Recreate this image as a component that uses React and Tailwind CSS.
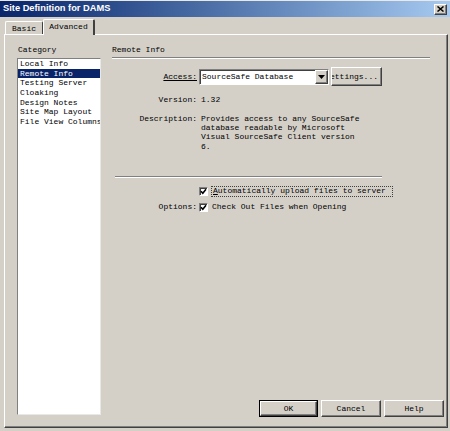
const raised =
  "bg-[#d4d0c8] border border-t-white border-l-white border-r-[#404040] border-b-[#404040] shadow-[inset_-1px_-1px_0_#808080]"
const sunken =
  "border border-t-[#808080] border-l-[#808080] border-b-white border-r-white shadow-[inset_1px_1px_0_#404040]"

function Check() {
  return (
    <span className={`w-[9px] h-[9px] bg-white flex items-center justify-center ${sunken}`}>
      <svg width="7" height="7" viewBox="0 0 7 7">
        <path d="M1 3.2 L2.8 5.2 L6 1.2" stroke="black" strokeWidth="1.6" fill="none" />
      </svg>
    </span>
  )
}

function Row({ label, children, className = "" }) {
  return (
    <div className={`flex items-center ${className}`}>
      <div className="w-[85px] shrink-0 text-right whitespace-nowrap">{label}</div>
      {children}
    </div>
  )
}

export default function App() {
  const categories = [
    "Local Info",
    "Remote Info",
    "Testing Server",
    "Cloaking",
    "Design Notes",
    "Site Map Layout",
    "File View Columns",
  ]

  return (
    <div className="w-[450px] h-[431px] bg-[#d4d0c8] flex flex-col overflow-hidden font-['Liberation_Mono',monospace] text-[8px] leading-[9.5px] text-black">
      {/* title bar */}
      <div className="h-[17px] shrink-0 flex items-center justify-between bg-linear-to-r from-[#0a246a] to-[#a6caf0] border-t border-[#e8e8e8]">
        <span className="pl-[3px] font-['Liberation_Sans',Arial,sans-serif] font-bold text-[9.3px] text-white whitespace-nowrap">
          Site Definition for DAMS
        </span>
        <span className={`w-[13px] h-[11px] mr-[3px] flex items-center justify-center ${raised}`}>
          <svg width="7" height="6" viewBox="0 0 7 6">
            <path d="M0.5 0.5 L6.5 5.5 M6.5 0.5 L0.5 5.5" stroke="black" strokeWidth="1.5" />
          </svg>
        </span>
      </div>

      {/* tabs */}
      <div className="mt-[2px] h-[15px] shrink-0 flex items-end pl-[5px]">
        <div className="w-[38px] h-[13px] pt-[1px] flex items-center justify-center border-t border-l border-white border-r border-r-[#404040] rounded-t-[2px]">
          Basic
        </div>
        <div className="relative z-10 w-[52px] h-[16px] mb-[-1px] pb-[1px] bg-[#d4d0c8] flex items-center justify-center border-t border-l border-white border-r-2 border-r-[#404040] rounded-t-[2px]">
          Advanced
        </div>
      </div>

      {/* tab panel */}
      <div className="ml-[4px] w-[444px] h-[394px] shrink-0 flex gap-[11px] pl-[12px] pt-[10px] pb-[10px] pr-[3px] border border-t-white border-l-white border-r-[#404040] border-b-[#404040] shadow-[inset_-1px_-1px_0_#808080]">
        {/* category list */}
        <div className="w-[84px] shrink-0 flex flex-col">
          <div className="h-[9.5px] pl-[1px]">Category</div>
          <div className="mt-[3.5px] h-[357px] bg-white border border-t-[#808080] border-l-[#808080] border-b-[#e8e8e8] border-r-[#e8e8e8] overflow-hidden">
            {categories.map((c) => (
              <div
                key={c}
                className={`h-[9.65px] leading-[9.65px] pl-[2px] whitespace-nowrap ${
                  c === "Remote Info" ? "bg-[#0a246a] text-white" : ""
                }`}
              >
                {c}
              </div>
            ))}
          </div>
        </div>

        {/* remote info */}
        <div className="flex-1 flex flex-col">
          <div className="h-[9.5px]">Remote Info</div>
          <div className="mt-[2.5px] w-[318px] h-[2px] border-t border-[#808080] border-b border-b-white" />

          <Row label={<span className="underline decoration-[0.5px]">Access:</span>} className="mt-[8px] h-[19px]">
            <div className="ml-[2px] w-[130px] h-[16px] bg-white flex items-center border border-t-[#808080] border-l-[#808080] border-b-white border-r-white shadow-[inset_1px_1px_0_#404040]">
              <span className="flex-1 pl-[2px] whitespace-nowrap overflow-hidden">SourceSafe Database</span>
              <span className={`w-[13px] h-[14px] flex items-center justify-center ${raised}`}>
                <svg width="7" height="4" viewBox="0 0 7 4">
                  <path d="M0 0 H7 L3.5 4 Z" fill="black" />
                </svg>
              </span>
            </div>
            <div className={`ml-[2px] w-[51px] h-[19px] flex items-center justify-end pr-[3px] overflow-hidden whitespace-nowrap ${raised}`}>
              <span className="shrink-0">Settings...</span>
            </div>
          </Row>

          <Row label="Version:" className="mt-[9px]">
            <span className="ml-[4px]">1.32</span>
          </Row>

          <div className="mt-[9px] flex items-start">
            <div className="w-[85px] shrink-0 text-right">Description:</div>
            <div className="ml-[4px] leading-[9.4px]">
              <div>Provides access to any SourceSafe</div>
              <div>database readable by Microsoft</div>
              <div>Visual SourceSafe Client version</div>
              <div>6.</div>
            </div>
          </div>

          <div className="mt-[25px] ml-[3px] w-[267px] h-[2px] border-t border-[#808080] border-b border-b-white" />

          <Row label="" className="mt-[7.5px] h-[11px]">
            <span className="ml-[2px]">
              <Check />
            </span>
            <span className="ml-[3px] h-[11px] pl-[1px] pr-[6px] flex items-center border border-dotted border-[#404040] whitespace-nowrap">
              <span>
                <span className="underline decoration-[0.5px]">A</span>utomatically upload files to server
              </span>
            </span>
          </Row>

          <Row label="Options:" className="mt-[5px] h-[11px]">
            <span className="ml-[2px]">
              <Check />
            </span>
            <span className="ml-[4px] whitespace-nowrap">Check Out Files when Opening</span>
          </Row>

          <div className="mt-auto flex justify-end gap-[3px]">
            <div className="w-[59px] h-[17px] border border-black">
              <div className={`w-full h-full flex items-center justify-center ${raised}`}>OK</div>
            </div>
            <div className={`w-[60px] h-[17px] flex items-center justify-center ${raised}`}>Cancel</div>
            <div className={`w-[60px] h-[17px] flex items-center justify-center ${raised}`}>Help</div>
          </div>
        </div>
      </div>
    </div>
  )
}
